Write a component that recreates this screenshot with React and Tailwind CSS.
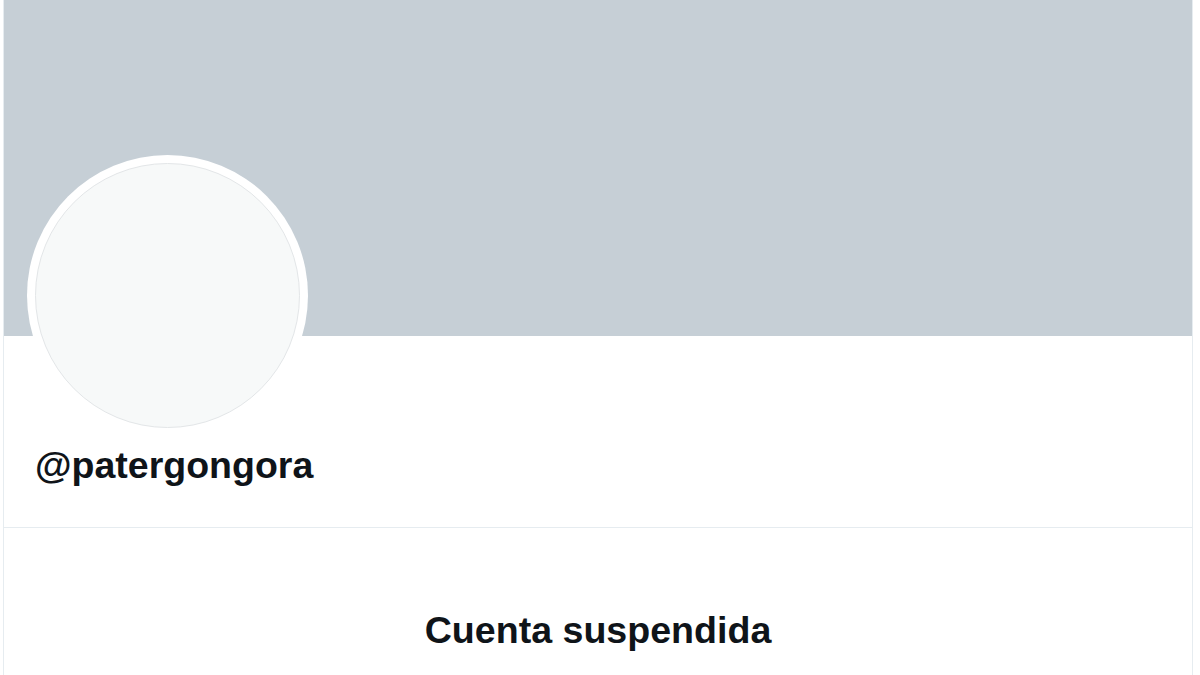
export default function App() {
  return (
    <div className="w-[1200px] h-[675px] overflow-hidden bg-white" style={{ fontFamily: '"Liberation Sans", Arial, sans-serif' }}>
      <div className="ml-[3px] w-[1190px] h-[675px] border-x border-[#e6ecf0] flex flex-col">
        <div className="h-[336px] bg-[#c6cfd6] shrink-0" />
        <div className="border-b border-[#e6ecf0] pl-[23px] pb-[40px]">
          <div className="-mt-[181px] w-[281px] h-[281px] rounded-full bg-white p-[8px] relative">
            <div className="w-full h-full rounded-full bg-[#f7f9f9] border border-[#e3e6e8]" />
          </div>
          <div className="mt-[7px] pl-[8px] text-[37.5px] leading-[44px] font-bold text-[#0f1419]">
            @patergongora
          </div>
        </div>
        <div className="pt-[80px] text-center text-[37.6px] leading-[44px] font-bold text-[#0f1419]">
          Cuenta suspendida
        </div>
      </div>
    </div>
  );
}
